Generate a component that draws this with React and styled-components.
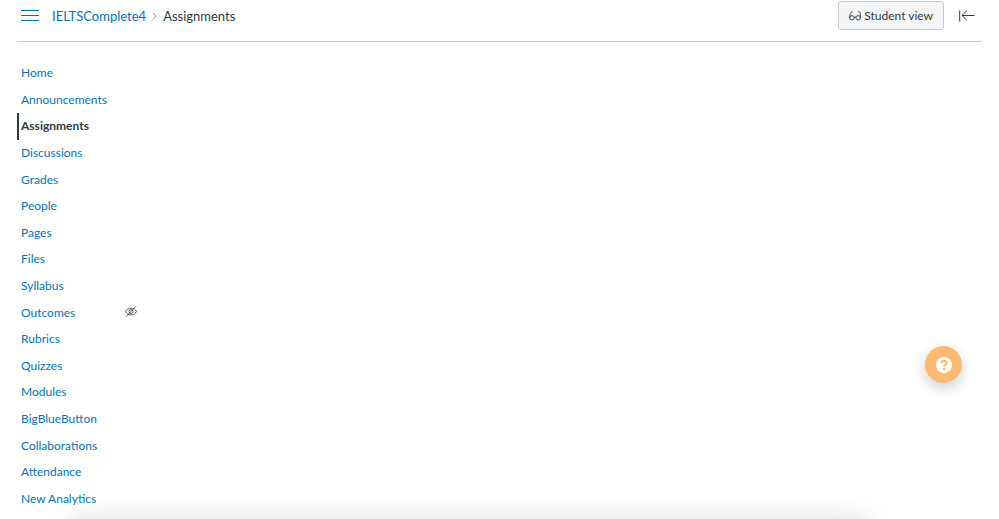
import React from 'react'
import styled, { createGlobalStyle } from 'styled-components'

const GlobalStyle = createGlobalStyle`
  * {
    box-sizing: border-box;
  }

  body {
    margin: 0;
    background: #fff;
    color: #2d3b45;
    font-family: Lato, 'Liberation Sans', sans-serif;
    overflow: hidden;
  }
`

const sections = [
  { label: 'Home' },
  { label: 'Announcements' },
  { label: 'Assignments', active: true },
  { label: 'Discussions' },
  { label: 'Grades' },
  { label: 'People' },
  { label: 'Pages' },
  { label: 'Files' },
  { label: 'Syllabus' },
  { label: 'Outcomes', hidden: true },
  { label: 'Rubrics' },
  { label: 'Quizzes' },
  { label: 'Modules' },
  { label: 'BigBlueButton' },
  { label: 'Collaborations' },
  { label: 'Attendance' },
  { label: 'New Analytics' },
]

const MenuIcon = () => (
  <svg width="18" height="14" viewBox="0 0 18 14" aria-hidden="true">
    <path d="M0 1.5h18M0 6.5h18M0 11.5h18" stroke="currentColor" strokeWidth="1.2" />
  </svg>
)

const ChevronIcon = () => (
  <svg width="5" height="8" viewBox="0 0 5 8" fill="none" aria-hidden="true">
    <path d="M0.8 0.8L4 4.2L0.8 7.6" stroke="#8b959e" strokeWidth="1" />
  </svg>
)

const GlassesIcon = () => (
  <svg width="12" height="10" viewBox="0 0 12 10" fill="none" stroke="currentColor" strokeWidth="0.9" aria-hidden="true">
    <circle cx="2.9" cy="6.8" r="2.2" />
    <circle cx="9.1" cy="6.8" r="2.2" />
    <path d="M0.7 6.8C0.7 3.6 1.2 1.2 3.6 0.7M11.3 6.8V2.2C11.3 1.1 10.4 0.6 8.8 0.7M5 6.3Q6 5.5 7 6.3" />
  </svg>
)

const CollapseIcon = () => (
  <svg width="16" height="12" viewBox="0 0 16 12" fill="none" stroke="currentColor" aria-hidden="true">
    <path d="M0.7 0.5v11M3 5.5h12.6M7.8 0.7L2.9 5.5l4.9 4.8" strokeWidth="1" />
  </svg>
)

const HiddenIcon = () => (
  <svg width="12" height="14" viewBox="0 0 12 14" fill="none" stroke="currentColor" role="img" aria-label="Hidden from students">
    <path d="M0.5 5.5C2.6 1 9.4 1 11.5 5.5C9.4 10 2.6 10 0.5 5.5Z" strokeWidth="0.8" />
    <circle cx="6" cy="5.5" r="2" strokeWidth="0.8" />
    <path d="M1.2 10.6L10.8 0.4" strokeWidth="0.8" />
  </svg>
)

const HelpIcon = () => (
  <svg width="16" height="16" viewBox="0 0 16 16" fill="none" aria-hidden="true">
    <circle cx="8" cy="8" r="8" fill="#fff" />
    <path
      d="M5.4 6.2C5.5 4.6 6.6 3.9 8 3.9C9.6 3.9 10.6 4.8 10.6 6C10.6 7.7 8.1 7.6 8.1 9.6"
      stroke="#fdba74"
      strokeWidth="2.1"
    />
    <circle cx="8.1" cy="12" r="1.3" fill="#fdba74" />
  </svg>
)

const App = () => (
  <>
    <GlobalStyle />
    <Page>
      <Header>
        <IconButton type="button" $tone="#0374b5" aria-label="Toggle course menu">
          <MenuIcon />
        </IconButton>
        <Breadcrumbs aria-label="Breadcrumbs">
          <CrumbLink href="#course">IELTSComplete4</CrumbLink>
          <ChevronIcon />
          <span>Assignments</span>
        </Breadcrumbs>
        <StudentViewButton type="button">
          <GlassesIcon />
          Student view
        </StudentViewButton>
        <IconButton type="button" $tone="#2d3b45" aria-label="Collapse">
          <CollapseIcon />
        </IconButton>
      </Header>
      <CourseNav aria-label="Course">
        {sections.map(({ label, active, hidden }) => (
          <NavItem key={label} $active={active}>
            <NavLink href={`#${label}`} $active={active} aria-current={active ? 'page' : undefined}>
              {label}
            </NavLink>
            {hidden && <HiddenIcon />}
          </NavItem>
        ))}
      </CourseNav>
    </Page>
    <HelpButton type="button" aria-label="Help">
      <HelpIcon />
    </HelpButton>
    <BottomShade />
  </>
)

const Page = styled.div`
  display: flex;
  flex-direction: column;
  min-height: 100vh;
  padding: 0 18px 7px 17px;
`

const Header = styled.header`
  display: flex;
  align-items: center;
  height: 42px;
  padding: 0 6px 10px 4px;
  border-bottom: 1px solid #c7cdd1;
`

const IconButton = styled.button`
  display: flex;
  padding: 0;
  border: 0;
  background: none;
  color: ${({ $tone }) => $tone};
  cursor: pointer;
`

const Breadcrumbs = styled.nav`
  display: flex;
  flex: 1;
  align-items: center;
  gap: 6px;
  margin-left: 13px;
  font-size: 13px;
  line-height: 20px;
`

const CrumbLink = styled.a`
  color: #0374b5;
  text-decoration: none;
`

const StudentViewButton = styled.button`
  display: flex;
  align-items: center;
  gap: 3px;
  height: 29px;
  margin-right: 15px;
  padding: 0 10px;
  border: 1px solid #c7cdd1;
  border-radius: 3px;
  background: #f5f5f5;
  color: #2d3b45;
  font-family: inherit;
  font-size: 12px;
  cursor: pointer;
`

const CourseNav = styled.nav`
  display: flex;
  flex: 1;
  flex-direction: column;
  width: 120px;
  padding-top: 18px;
`

const NavItem = styled.div`
  display: flex;
  flex: 1;
  align-items: center;
  justify-content: space-between;
  padding-left: ${({ $active }) => ($active ? '2px' : '4px')};
  border-left: ${({ $active }) => ($active ? '2px solid #2d3b45' : '0')};
`

const NavLink = styled.a`
  color: ${({ $active }) => ($active ? '#2d3b45' : '#0374b5')};
  font-size: 12px;
  font-weight: ${({ $active }) => ($active ? 700 : 400)};
  line-height: 20px;
  text-decoration: none;
`

const HelpButton = styled.button`
  position: fixed;
  right: 37px;
  bottom: 136px;
  display: flex;
  align-items: center;
  justify-content: center;
  width: 37px;
  height: 37px;
  padding: 0;
  border: 0;
  border-radius: 50%;
  background: #fdba74;
  box-shadow: 0 5px 14px rgba(0, 0, 0, 0.2);
  cursor: pointer;
`

/* shadow cast by the panel docked under the viewport */
const BottomShade = styled.div`
  position: fixed;
  right: 132px;
  bottom: -40px;
  left: 72px;
  height: 36px;
  box-shadow: 0 0 30px rgba(0, 0, 0, 0.18);
  pointer-events: none;
`

export default App
